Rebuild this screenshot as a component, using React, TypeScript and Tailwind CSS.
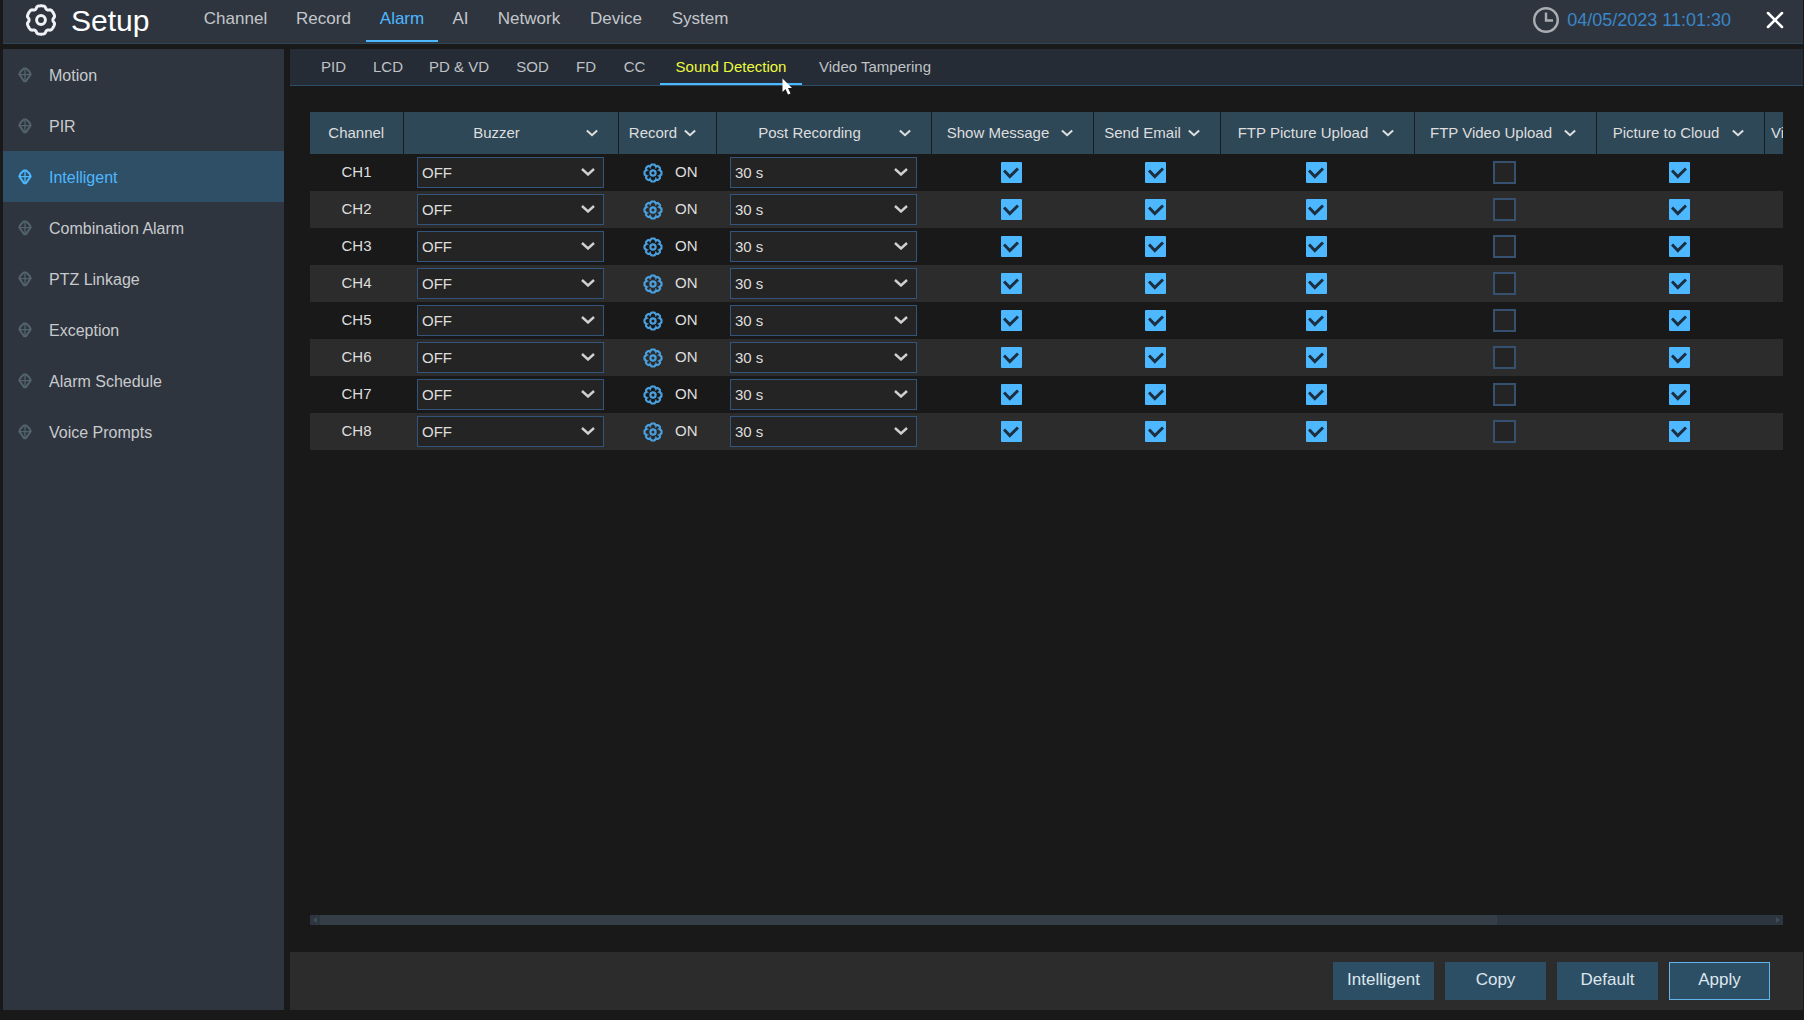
import React from 'react';
import { X } from 'lucide-react';

const NAV = [
  { label: 'Channel', width: 'w-[91px]' },
  { label: 'Record', width: 'w-[85px]' },
  { label: 'Alarm', width: 'w-[72px]' },
  { label: 'AI', width: 'w-[45px]' },
  { label: 'Network', width: 'w-[92px]' },
  { label: 'Device', width: 'w-[82px]' },
  { label: 'System', width: 'w-[86px]' },
];

const MENU = [
  'Motion',
  'PIR',
  'Intelligent',
  'Combination Alarm',
  'PTZ Linkage',
  'Exception',
  'Alarm Schedule',
  'Voice Prompts',
];

const TABS = [
  { label: 'PID', width: 'w-[53px]' },
  { label: 'LCD', width: 'w-[56px]' },
  { label: 'PD & VD', width: 'w-[86px]' },
  { label: 'SOD', width: 'w-[61px]' },
  { label: 'FD', width: 'w-[46px]' },
  { label: 'CC', width: 'w-[51px]' },
  { label: 'Sound Detection', width: 'w-[142px]' },
  { label: 'Video Tampering', width: 'w-[146px]' },
];

const COLUMNS = [
  { label: 'Buzzer', width: 'w-[215px]' },
  { label: 'Record', width: 'w-[98px]' },
  { label: 'Post Recording', width: 'w-[215px]' },
  { label: 'Show Message', width: 'w-[162px]' },
  { label: 'Send Email', width: 'w-[127px]' },
  { label: 'FTP Picture Upload', width: 'w-[194px]' },
  { label: 'FTP Video Upload', width: 'w-[182px]' },
  { label: 'Picture to Cloud', width: 'w-[168px]' },
  { label: 'Video to Cloud', width: 'w-[140px]' },
];

const CHECKS = [
  { label: 'Show Message', on: true },
  { label: 'Send Email', on: true },
  { label: 'FTP Picture Upload', on: true },
  { label: 'FTP Video Upload', on: false },
  { label: 'Picture to Cloud', on: true },
];

const CHANNELS = ['CH1', 'CH2', 'CH3', 'CH4', 'CH5', 'CH6', 'CH7', 'CH8'];

const ACTIONS = ['Intelligent', 'Copy', 'Default', 'Apply'];

// Closed outline with `teeth` broad lobes, the first one pointing up
const gearPath = (teeth: number, center: number, radius: number, depth: number) => {
  const points = Array.from({ length: 120 }, (_, i) => {
    const a = (i / 120) * Math.PI * 2;
    const r = radius + depth * Math.tanh(2.4 * Math.cos(teeth * a) + 1.4);
    return `${(center + r * Math.sin(a)).toFixed(2)} ${(center - r * Math.cos(a)).toFixed(2)}`;
  });
  return `M${points.join('L')}Z`;
};

const SETUP_GEAR = gearPath(6, 16, 12.9, 1.3);
const RECORD_GEAR = gearPath(8, 10, 7.9, 0.6);

const Chevron: React.FC<{ className: string }> = ({ className }) => (
  <svg viewBox="0 0 14 8" className={className} fill="none" stroke="currentColor" strokeWidth="2.4" aria-hidden="true">
    <path d="M1 1l6 5.5L13 1" />
  </svg>
);

const SetupIcon: React.FC = () => (
  <svg viewBox="0 0 32 32" className="size-8 text-[#eef1f5]" fill="none" stroke="currentColor" strokeWidth="3" strokeLinejoin="round" aria-hidden="true">
    <path d={SETUP_GEAR} />
    <circle cx="16" cy="16" r="4.4" />
  </svg>
);

const RecordIcon: React.FC = () => (
  <svg viewBox="0 0 20 20" className="block size-5 text-[#4a9fde]" fill="none" stroke="currentColor" strokeWidth="2.2" strokeLinejoin="round" aria-hidden="true">
    <path d={RECORD_GEAR} />
    <circle cx="10" cy="10" r="2.6" />
    <path d="M6.8 3.800l.7 1.600M13.200 3.800l-.7 1.600M6.800 16.200l.7-1.600M13.200 16.200l-.7-1.600M3.800 6.800l1.600.7M16.200 6.800l-1.600.7M3.800 13.200l1.600-.7M16.200 13.200l-1.600-.7" strokeWidth="1.2" />
  </svg>
);

const MenuIcon: React.FC = () => (
  <svg viewBox="0 0 14 16" className="w-3.5 h-4" fill="none" stroke="currentColor" strokeWidth="2" strokeLinejoin="round" aria-hidden="true">
    <path d="M5.800 1.500H8.200L11.600 4.800L12.700 7.500L7.800 14.300H6.200L1.300 7.500L2.400 4.800Z" />
    <path d="M7 1.500V14.300M2 7.600H12" strokeWidth="1.300" />
  </svg>
);

const ClockIcon: React.FC = () => (
  <svg viewBox="0 0 26 26" className="size-[26px] text-[#a9adb2]" fill="none" stroke="currentColor" strokeWidth="2.4" aria-hidden="true">
    <circle cx="13" cy="13" r="11.800" />
    <path d="M13 5.500V13.500H20" />
  </svg>
);

const Dropdown: React.FC<{ label: string; value: string }> = ({ label, value }) => (
  <div className="relative w-[187px]">
    <select
      aria-label={label}
      className="block h-[31px] w-full appearance-none rounded-none border border-[#33557b] bg-[#242424] px-1 pt-0.5 text-[15px] text-[#dedede] outline-none"
    >
      <option>{value}</option>
    </select>
    <Chevron className="pointer-events-none absolute right-[9px] top-[11px] h-2 w-3.5 text-[#d0d0d0]" />
  </div>
);

const Checkbox: React.FC<{ label: string; on: boolean }> = ({ label, on }) => (
  <span className="relative inline-flex size-[23px] items-center justify-center align-middle">
    <input
      type="checkbox"
      aria-label={label}
      defaultChecked={on}
      className="peer size-[23px] appearance-none border-2 border-[#36506f] bg-[#242424] checked:size-[21px] checked:rounded-[1px] checked:border-0 checked:bg-[#4db8ff]"
    />
    <svg viewBox="0 0 16 12" className="pointer-events-none absolute hidden h-3 w-4 text-[#1b2f40] peer-checked:block" fill="none" stroke="currentColor" strokeWidth="3" aria-hidden="true">
      <path d="M1 3.500L6.800 9.500L15 1.500" />
    </svg>
  </span>
);

const Header: React.FC = () => (
  <header className="flex h-11 items-start border-b border-[#2d4656] bg-[#2e353f]">
    <div className="flex h-10 w-[187px] items-center gap-[14px] pl-[22px]">
      <SetupIcon />
      <h1 className="pt-0.5 text-[30px] leading-10 text-white">Setup</h1>
    </div>
    <nav className="flex">
      {NAV.map(({ label, width }) => (
        <a
          key={label}
          href="#"
          className={`${width} flex h-[42px] items-center justify-center border-b-2 pb-0.5 text-[17px] ${
            label === 'Alarm' ? 'border-[#4db8ff] text-[#4db8ff]' : 'border-transparent text-[#c3c6ca]'
          }`}
        >
          {label}
        </a>
      ))}
    </nav>
    <div className="ml-auto flex h-10 items-center pr-3.5">
      <ClockIcon />
      <time className="ml-2 text-lg text-[#3a86c8]">04/05/2023 11:01:30</time>
      <button aria-label="Close" className="ml-[30px] text-white">
        <X size={28} strokeWidth={2.2} />
      </button>
    </div>
  </header>
);

const Sidebar: React.FC = () => (
  <aside className="w-[281px] shrink-0 bg-[#2e353f]">
    {MENU.map((item) => (
      <a
        key={item}
        href="#"
        className={`flex h-[51px] items-center gap-[17px] pl-[15px] text-base ${
          item === 'Intelligent' ? 'bg-[#2f4f66] text-[#4db8ff]' : 'text-[#52636d]'
        }`}
      >
        <MenuIcon />
        <span className={item === 'Intelligent' ? 'pt-0.5' : 'pt-0.5 text-[#c8cacc]'}>{item}</span>
      </a>
    ))}
  </aside>
);

const Tabs: React.FC = () => (
  <nav className="relative flex h-[37px] border-b border-[#2c5069] bg-[#262c35] pl-[17px]">
    {TABS.map(({ label, width }) => (
      <a
        key={label}
        href="#"
        className={`${width} flex items-center justify-center whitespace-nowrap border-b-2 pt-0.5 text-[15px] ${
          label === 'Sound Detection' ? 'border-[#4db8ff] text-[#ecfb3e]' : 'border-transparent text-[#bfc2c6]'
        }`}
      >
        {label}
      </a>
    ))}
    <svg viewBox="0 0 11 17" className="absolute left-[492px] top-[29px] h-[17px] w-[11px]" aria-hidden="true">
      <path d="M0.500 0.500V14L3.500 11L6 16.500L8.500 15.500L6 10H10Z" fill="#fff" />
    </svg>
  </nav>
);

const ChannelTable: React.FC = () => (
  <div className="overflow-hidden">
    <table className="w-[1594px] table-fixed border-collapse text-[15px] text-[#dedede]">
      <thead>
        <tr className="h-[42px] bg-[#2f4858]">
          <th className="w-[93px] border-r border-[#141d23] p-0 font-normal">Channel</th>
          {COLUMNS.map(({ label, width }) => (
            <th key={label} className={`${width} border-r border-[#141d23] p-0 font-normal`}>
              <button className="flex w-full items-center whitespace-nowrap pr-5">
                <span className="flex-1 pl-1 text-center">{label}</span>
                <Chevron className="h-2 w-3" />
              </button>
            </th>
          ))}
        </tr>
      </thead>
      <tbody>
        {CHANNELS.map((channel) => (
          <tr key={channel} className="h-[37px] even:bg-[#2c2c2c]">
            <td className="p-0 text-center">{channel}</td>
            <td className="p-0 pl-[14px]">
              <Dropdown label={`${channel} Buzzer`} value="OFF" />
            </td>
            <td className="p-0">
              <div className="flex items-center gap-3 pl-[25px]">
                <button aria-label={`${channel} Record settings`}>
                  <RecordIcon />
                </button>
                <span>ON</span>
              </div>
            </td>
            <td className="p-0 pl-[14px]">
              <Dropdown label={`${channel} Post Recording`} value="30 s" />
            </td>
            {CHECKS.map(({ label, on }) => (
              <td key={label} className="p-0 pr-0.5 text-center">
                <Checkbox label={`${channel} ${label}`} on={on} />
              </td>
            ))}
            <td className="p-0" />
          </tr>
        ))}
      </tbody>
    </table>
  </div>
);

const ScrollArrow: React.FC<{ d: string }> = ({ d }) => (
  <svg viewBox="0 0 10 10" className="size-2.5 shrink-0 text-[#3f4b57]" fill="currentColor" aria-hidden="true">
    <path d={d} />
  </svg>
);

const ScrollBar: React.FC = () => (
  <div className="flex h-2.5 bg-[#2c3540]">
    <ScrollArrow d="M7 2v6L3 5z" />
    <div className="flex-1">
      <div className="h-full w-[81%] bg-[#353d46]" />
    </div>
    <ScrollArrow d="M3 2v6l4-3z" />
  </div>
);

const Footer: React.FC = () => (
  <footer className="flex h-[58px] items-center justify-end gap-[11px] bg-[#2c2c2c] pr-[33px]">
    {ACTIONS.map((action) => (
      <button
        key={action}
        className={`h-[38px] w-[101px] border bg-[#2d4f66] pb-0.5 text-[17px] text-[#dde6ec] ${
          action === 'Apply' ? 'border-[#62b5ec]' : 'border-transparent'
        }`}
      >
        {action}
      </button>
    ))}
  </footer>
);

const App: React.FC = () => {
  return (
    <div className="flex min-h-screen flex-col gap-[5px] bg-[#191919] pb-[10px] pl-[3px] pr-px font-['Liberation_Sans',Arial,sans-serif]">
      <Header />
      <div className="flex flex-1 gap-1.5">
        <Sidebar />
        <main className="flex min-w-0 flex-1 flex-col">
          <Tabs />
          <div className="flex flex-1 flex-col justify-between pb-[27px] pl-5 pr-5 pt-[26px]">
            <ChannelTable />
            <ScrollBar />
          </div>
          <Footer />
        </main>
      </div>
    </div>
  );
};

export default App;
